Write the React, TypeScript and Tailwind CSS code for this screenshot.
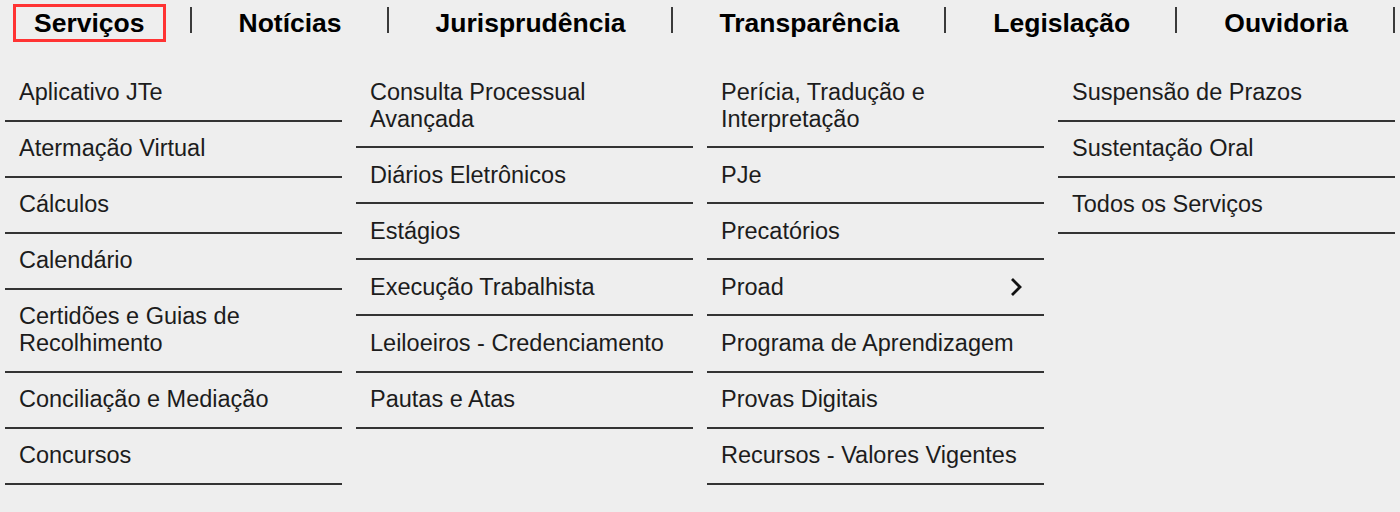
import React from "react";

const navItems = ["Serviços", "Notícias", "Jurisprudência", "Transparência", "Legislação", "Ouvidoria"];

type Item = { lines: string[]; arrow?: boolean };

const columns: Item[][] = [
  [
    { lines: ["Aplicativo JTe"] },
    { lines: ["Atermação Virtual"] },
    { lines: ["Cálculos"] },
    { lines: ["Calendário"] },
    { lines: ["Certidões e Guias de", "Recolhimento"] },
    { lines: ["Conciliação e Mediação"] },
    { lines: ["Concursos"] },
  ],
  [
    { lines: ["Consulta Processual", "Avançada"] },
    { lines: ["Diários Eletrônicos"] },
    { lines: ["Estágios"] },
    { lines: ["Execução Trabalhista"] },
    { lines: ["Leiloeiros - Credenciamento"] },
    { lines: ["Pautas e Atas"] },
  ],
  [
    { lines: ["Perícia, Tradução e", "Interpretação"] },
    { lines: ["PJe"] },
    { lines: ["Precatórios"] },
    { lines: ["Proad"], arrow: true },
    { lines: ["Programa de Aprendizagem"] },
    { lines: ["Provas Digitais"] },
    { lines: ["Recursos - Valores Vigentes"] },
  ],
  [
    { lines: ["Suspensão de Prazos"] },
    { lines: ["Sustentação Oral"] },
    { lines: ["Todos os Serviços"] },
  ],
];

function Chevron() {
  return (
    <svg width="14" height="22" viewBox="0 0 14 22" className="shrink-0">
      <polyline points="3,3 11,11 3,19" fill="none" stroke="#111" strokeWidth="2.8" strokeLinecap="butt" strokeLinejoin="miter" />
    </svg>
  );
}

export default function App() {
  return (
    <div
      className="w-[1400px] h-[512px] overflow-hidden bg-[#eeeeee]"
      style={{ fontFamily: "'Liberation Sans', Arial, sans-serif" }}
    >
      <nav className="flex items-start pt-[4px] pl-[13px]">
        {navItems.map((label, i) => (
          <React.Fragment key={label}>
            <a
              className={
                "block border-[3px] px-[18px] text-[26.5px] leading-[32px] font-bold text-black whitespace-nowrap " +
                (i === 0 ? "border-[#ff3333]" : "border-transparent")
              }
            >
              {label}
            </a>
            <span className="block mt-[3px] ml-[24px] mr-[26px] h-[26px] w-[2px] bg-[#3a3a3a] shrink-0" />
          </React.Fragment>
        ))}
      </nav>

      <div className="mt-[23.5px] pl-[5px] grid grid-cols-[repeat(4,337px)] gap-x-[14px] items-start">
        {columns.map((col, ci) => (
          <ul key={ci} className="flex flex-col">
            {col.map((item, ii) => (
              <li
                key={ii}
                className="flex items-center justify-between border-b-2 border-[#333] pl-[14px] pr-[21px] pt-[13.5px] pb-[14px] text-[23.5px] leading-[26.6px] text-[#1c1c1c]"
              >
                <span>
                  {item.lines.map((l, li) => (
                    <React.Fragment key={li}>
                      {li > 0 && <br />}
                      {l}
                    </React.Fragment>
                  ))}
                </span>
                {item.arrow && <Chevron />}
              </li>
            ))}
          </ul>
        ))}
      </div>
    </div>
  );
}
